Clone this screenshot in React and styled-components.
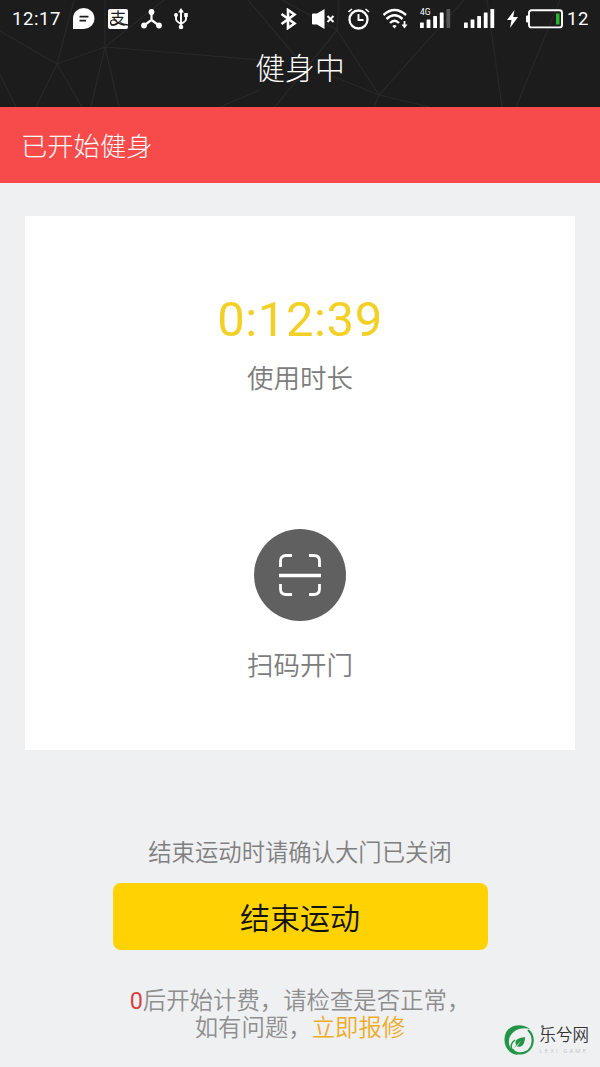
import styled, { createGlobalStyle } from "styled-components";

function App() {
  return (
    <>
      <GlobalStyle />
      <Screen>
        <Header>
          <Pattern />
          <StatusBar />
          <Title>健身中</Title>
        </Header>
        <Notice>已开始健身</Notice>
        <Card>
          <Timer>0:12:39</Timer>
          <CardLabel>使用时长</CardLabel>
          <ScanButton aria-label="扫码开门">
            <ScanIcon />
          </ScanButton>
          <CardLabel>扫码开门</CardLabel>
        </Card>
        <Footer>
          <Reminder>结束运动时请确认大门已关闭</Reminder>
          <EndButton>结束运动</EndButton>
          <Billing>
            <span className="count">0</span>后开始计费，请检查是否正常，
            <br />
            如有问题，<span className="repair">立即报修</span>
          </Billing>
        </Footer>
        <Watermark />
      </Screen>
    </>
  );
}

export default App;

function StatusBar() {
  return (
    <StatusRow>
      <StatusText>12:17</StatusText>
      <Icon $gap={12} width="22" height="22" viewBox="0 0 22 22">
        <path d="M0 21V10.500A10.700 10.500 0 1 1 10.700 21Z" fill="#fff" />
        <path d="M6.500 8.700H15.500M6.500 12.700H13" stroke="#1c1c1c" strokeWidth="1.800" />
      </Icon>
      <PayBadge>
        <span>支</span>
        <svg width="20" height="20" viewBox="0 0 20 20">
          <path d="M9 11.500C5 10 2.500 11 2.500 13.500C2.500 16.500 7 17 10 14M12 13.500Q15 15.500 20 16" />
        </svg>
      </PayBadge>
      <Icon $gap={13} width="21" height="20" viewBox="0 0 21 20">
        <path d="M10.500 3V11L3 16.500M10.500 11L18 16.500" fill="none" stroke="#fff" strokeWidth="2.200" />
        <circle cx="10.500" cy="3" r="2.900" fill="#fff" />
        <circle cx="3" cy="16.500" r="2.900" fill="#fff" />
        <circle cx="18" cy="16.500" r="2.900" fill="#fff" />
      </Icon>
      <Icon $gap={12} width="14" height="22" viewBox="0 0 14 22">
        <path d="M7 3V19M2 7V11Q2 13 4 14L7 16M12 7V11Q12 13 10 14L7 16" fill="none" stroke="#fff" strokeWidth="1.900" />
        <path d="M7 0L10 4.500H4ZM10.200 5H13.800V9H10.200Z" fill="#fff" />
        <circle cx="2" cy="7" r="2" fill="#fff" />
        <circle cx="7" cy="19" r="2.300" fill="#fff" />
      </Icon>
      <Spacer />
      <Icon width="17" height="22" viewBox="0 0 17 22">
        <path d="M1.500 6L14.500 15.500L8 20V2L14.500 6.500L1.500 16" fill="none" stroke="#fff" strokeWidth="2.600" />
      </Icon>
      <Icon $gap={15} width="24" height="20" viewBox="0 0 24 20">
        <path d="M1 4.500H5L12.500 0V20L5 15.500H1Q0 15.500 0 14.500V5.500Q0 4.500 1 4.500Z" fill="#fff" />
        <path d="M15.500 7L21.500 13M21.500 7L15.500 13" stroke="#fff" strokeWidth="2" />
      </Icon>
      <Icon $gap={12} width="22" height="22" viewBox="0 0 22 22">
        <circle cx="10.500" cy="11.500" r="9" fill="none" stroke="#fff" strokeWidth="2.300" />
        <path d="M10.500 6V12H15.500" fill="none" stroke="#fff" strokeWidth="1.900" />
        <path d="M.5 4L4 1M21 4L17.500 1" stroke="#fff" strokeWidth="1.600" />
      </Icon>
      <Icon $gap={12} width="26" height="22" viewBox="0 0 26 22">
        <path d="M1.500 7Q12.500-3 24 7M4.500 11Q12.500 3.500 20.500 11M8 15Q12.500 10.500 17 15" fill="none" stroke="#fff" strokeWidth="2.400" />
        <path d="M10.300 18Q12.500 16 14.700 18L12.500 20.500Z" fill="#fff" />
        <path d="M22.500 13V18" stroke="#fff" strokeWidth="1.800" />
        <path d="M19.500 16.500H25.500L22.500 20.500Z" fill="#fff" />
      </Icon>
      <SignalBox>
        <NetworkTag>4G</NetworkTag>
        <Signal bars={4} />
      </SignalBox>
      <SignalBox>
        <Signal bars={5} />
      </SignalBox>
      <Icon $gap={12.5} width="11" height="18" viewBox="0 0 11 18">
        <path d="M7.500 0L0 10H4.500L3 18L11 7H6.200Z" fill="#fff" />
      </Icon>
      <Icon $gap={8} width="37" height="20" viewBox="0 0 37 20">
        <rect x="3" y="1.200" width="33" height="17.200" rx="2.500" fill="none" stroke="#fff" strokeWidth="1.900" />
        <rect x="0" y="6.500" width="3" height="7" rx="1" fill="#fff" />
        <rect x="30" y="4.500" width="3.500" height="11" fill="#2db52b" />
      </Icon>
      <BatteryText>12</BatteryText>
    </StatusRow>
  );
}

function Signal({ bars }) {
  const heights = [5.5, 8.5, 12, 15.5, 19];
  return (
    <svg width="31" height="20" viewBox="0 0 31 20">
      {heights.map((h, index) => (
        <rect key={h} x={index * 6.6} y={19 - h} width="3.800" height={h} rx="0.600" fill={index < bars ? "#fff" : "#555"} />
      ))}
    </svg>
  );
}

function Pattern() {
  return (
    <PatternSvg width="600" height="107" viewBox="0 0 600 107">
      <path d="M0 31L57 64L36 107M57 64L105 47L164 0M57 64L82 107M57 64L74 0M105 47L91 107M105 47L119 107M105 47V0M105 47L260 60M0 75L16 107M248 0L297 58M337 30L275 107M337 30L282 0M337 30L379 95L464 0M337 30L339 0M379 95L332 76M379 95L374 107M379 95L430 107M487 0L502 107M516 107L560 0M220 107L260 90" />
    </PatternSvg>
  );
}

function ScanIcon() {
  return (
    <svg width="44" height="44" viewBox="0 0 44 44" fill="none" stroke="#fff">
      <path d="M2.500 14V8Q2.500 2.500 8 2.500H14M31 2.500H36Q41.500 2.500 41.500 8V14M2.500 31V36Q2.500 41.500 8 41.500H14M31 41.500H36Q41.500 41.500 41.500 36V31" strokeWidth="2.800" />
      <path d="M1 22.500H43" strokeWidth="3.600" />
    </svg>
  );
}

function Watermark() {
  return (
    <WatermarkBox>
      <svg width="30" height="32" viewBox="0 0 30 32">
        <path d="M26 5C18-2 1 0 .5 15C0 24 6 30 14 31C8 27 4 22 5 16C6 7 17 2 26 5Z" fill="#239547" />
        <path d="M24 6C31 12 30 24 22 28C16 31 10 29 8 25" fill="none" stroke="#239547" strokeWidth="2.200" />
        <path d="M12 21C10 15 15 14 21 13C21 20 18 24 13 22.500L17 17L10 24Z" fill="#239547" />
        <path d="M7.500 25C6.500 21 8 18 11 16" fill="none" stroke="#239547" strokeWidth="1.500" />
      </svg>
      <div>
        <WatermarkName>乐兮网</WatermarkName>
        <WatermarkSub>LEXI GAME</WatermarkSub>
      </div>
    </WatermarkBox>
  );
}

const GlobalStyle = createGlobalStyle`
  * {
    box-sizing: border-box;
  }
  body {
    margin: 0;
    background-color: #eff0f2;
    font-family: Roboto, "Noto Sans CJK SC", sans-serif;
    font-weight: 350;
  }
`;

const Screen = styled.div`
  position: relative;
  display: flex;
  flex-direction: column;
  width: 600px;
  height: 1067px;
  overflow: hidden;
  background-color: #eff0f2;
`;

const Header = styled.header`
  position: relative;
  height: 107px;
  color: #fff;
  background-color: #1c1c1c;
`;

const PatternSvg = styled.svg`
  position: absolute;
  top: 0;
  left: 0;
  fill: none;
  stroke: #282828;
  stroke-width: 1.2;
`;

const StatusRow = styled.div`
  position: relative;
  display: flex;
  align-items: center;
  height: 37px;
  padding: 0 11px 0 12px;
`;

const StatusText = styled.span`
  width: 49px;
  font-size: 18.5px;
  font-weight: 400;
  letter-spacing: 0.6px;
  white-space: nowrap;
`;

const BatteryText = styled(StatusText)`
  width: 22px;
  margin-left: 4px;
`;

const Icon = styled.svg`
  flex: none;
  margin-left: ${(props) => props.$gap || 0}px;
`;

const PayBadge = styled.div`
  position: relative;
  width: 20px;
  height: 20px;
  margin-left: 13px;
  border-radius: 2px;
  background-color: #fff;
  color: #1c1c1c;
  font-size: 16px;
  font-weight: 400;
  line-height: 19px;
  text-align: center;

  svg {
    position: absolute;
    top: 0;
    left: 0;
    fill: none;
    stroke: #1c1c1c;
    stroke-width: 1.3;
  }
`;

const Spacer = styled.div`
  flex: 1;
`;

const SignalBox = styled.div`
  position: relative;
  display: flex;
  margin-left: 12.5px;
`;

const NetworkTag = styled.span`
  position: absolute;
  top: -1px;
  left: 0;
  font-size: 8.5px;
  font-weight: 400;
  line-height: 8px;
`;

const Title = styled.h1`
  position: relative;
  margin: 0;
  font-size: 29.8px;
  font-weight: 300;
  line-height: 63px;
  text-align: center;
`;

const Notice = styled.div`
  height: 76px;
  padding: 2px 0 0 21px;
  background-color: #f74a4a;
  color: #fff;
  font-size: 26.3px;
  font-weight: 300;
  line-height: 76px;
`;

const Card = styled.main`
  display: flex;
  flex-direction: column;
  align-items: center;
  height: 534px;
  margin: 33px 25px 0;
  padding-top: 74px;
  background-color: #fff;
`;

const Timer = styled.div`
  color: #f3d026;
  font-size: 49px;
  font-weight: 400;
  line-height: 60px;
  letter-spacing: 0.6px;
`;

const CardLabel = styled.div`
  padding-top: 2px;
  color: #7c7c7c;
  font-size: 26.5px;
  line-height: 54px;
`;

const ScanButton = styled.button`
  display: flex;
  align-items: center;
  justify-content: center;
  flex: none;
  width: 92px;
  height: 92px;
  margin: 123px 0 16px;
  padding: 0;
  border: none;
  border-radius: 50%;
  background-color: #606060;
`;

const Footer = styled.footer`
  display: flex;
  flex-direction: column;
  align-items: center;
  padding-top: 86px;
`;

const Reminder = styled.div`
  color: #7f7f7f;
  font-size: 23.35px;
  line-height: 34px;
`;

const EndButton = styled.button`
  width: 375px;
  height: 67px;
  margin-top: 13px;
  padding: 4px 0 0;
  border: none;
  border-radius: 8px;
  background-color: #ffd303;
  color: #111;
  font-family: inherit;
  font-size: 30px;
  font-weight: 350;
  line-height: 63px;
`;

const Billing = styled.div`
  margin-top: 38px;
  color: #8e8e8e;
  font-size: 23.4px;
  line-height: 27px;
  text-align: center;
  white-space: nowrap;

  .count {
    color: #d94040;
    font-weight: 400;
  }
  .repair {
    color: #efab28;
  }
`;

const WatermarkBox = styled.div`
  position: absolute;
  right: 11px;
  bottom: 11px;
  display: flex;
  align-items: center;
  gap: 6px;
`;

const WatermarkName = styled.div`
  position: relative;
  color: #333;
  font-size: 16.5px;
  line-height: 20px;

  &::before {
    content: "";
    position: absolute;
    top: -1px;
    left: 1px;
    width: 3px;
    height: 3px;
    border-radius: 50%;
    background-color: #777;
  }
`;

const WatermarkSub = styled.div`
  color: #b5b7b9;
  font-size: 6px;
  line-height: 9px;
  letter-spacing: 2.1px;
`;
